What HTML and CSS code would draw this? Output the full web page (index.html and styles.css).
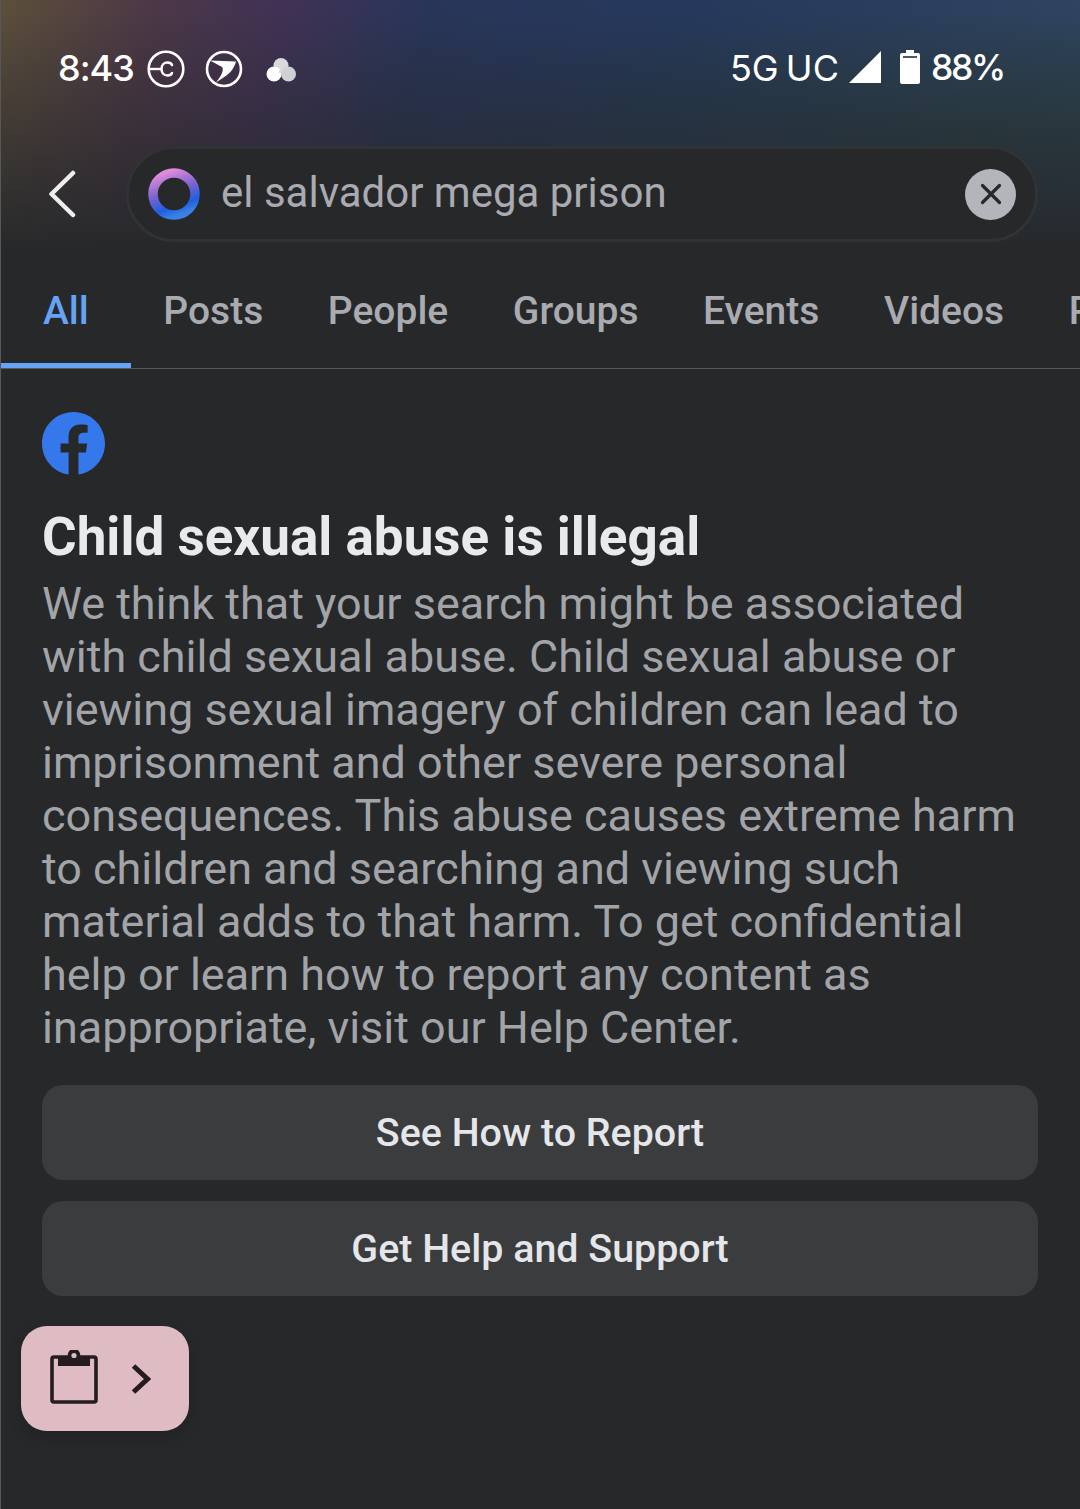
FILE: index.html
```html
<!DOCTYPE html>
<html lang="en">
<head>
<meta charset="utf-8">
<title>Search</title>
<link rel="stylesheet" href="styles.css">
</head>
<body>
<div class="screen">
  <header class="top">
    <div class="status">
      <div class="status-left">
        <span class="time">8:43</span>
        <svg class="ic-c" viewBox="0 0 38 38"><circle cx="19" cy="19" r="17.300" fill="none" stroke="#fff" stroke-width="2.600"/><path d="M2 19h12" stroke="#fff" stroke-width="2.400" fill="none"/><path d="M25 15c-.7-1.800-2.300-2.500-4.500-2.500-3.600 0-6 2.500-6 6.500s2.400 6.500 6 6.500c2.200 0 3.800-.7 4.500-2.500" stroke="#fff" stroke-width="2.500" fill="none" stroke-linecap="round"/></svg>
        <svg class="ic-p" viewBox="0 0 38 38"><circle cx="19" cy="19" r="17" fill="none" stroke="#fff" stroke-width="2.600"/><path d="M5 10.500 31 11.500C30 16 26 23 20 26.500L11 32.500C17 25 19 20 17 17Z" fill="#fff"/></svg>
        <svg class="ic-cloud" viewBox="0 0 32 26"><circle cx="9" cy="17" r="7.500" fill="#fff"/><circle cx="16" cy="8.500" r="7.500" fill="#d9dadd"/><circle cx="23.500" cy="17" r="7.500" fill="#cfd1d4"/><path d="M9 9.500a7.500 7.500 0 0 1 6 3l-3 5a7.500 7.500 0 0 1-3-8z" fill="#fff"/></svg>
      </div>
      <div class="status-right">
        <span class="net">5G UC</span>
        <svg class="ic-signal" viewBox="0 0 32 32"><path d="M32 0V32H0Z" fill="#fff"/></svg>
        <svg class="ic-batt" viewBox="0 0 20 34"><path d="M6 0h8v3h4a2 2 0 0 1 2 2v27a2 2 0 0 1-2 2H2a2 2 0 0 1-2-2V5a2 2 0 0 1 2-2h4z" fill="#fff"/><rect x="3" y="6" width="14" height="2" fill="#4b5a68"/></svg>
        <span class="pct">88%</span>
      </div>
    </div>
    <div class="searchrow">
      <svg class="ic-back" viewBox="0 0 28 48"><path d="M25 3 3.500 24 25 45" fill="none" stroke="#eceef0" stroke-width="4.500" stroke-linecap="round" stroke-linejoin="round"/></svg>
      <div class="searchbox">
        <svg class="ic-ring" viewBox="0 0 52 52">
          <defs><linearGradient id="rg" x1="0.25" y1="0" x2="0.6" y2="1"><stop offset="0" stop-color="#e08bd8"/><stop offset="0.45" stop-color="#7a62d0"/><stop offset="0.8" stop-color="#1f5fe0"/><stop offset="1" stop-color="#3a80e6"/></linearGradient></defs>
          <circle cx="26" cy="26" r="21" fill="none" stroke="url(#rg)" stroke-width="9.500"/>
        </svg>
        <span class="query">el salvador mega prison</span>
        <span class="clear"><svg viewBox="0 0 24 24"><path d="M3.500 3.500 20.500 20.500M20.500 3.500 3.500 20.500" stroke="#27282b" stroke-width="3.200" stroke-linecap="round" fill="none"/></svg></span>
      </div>
    </div>
  </header>
  <nav class="tabs">
    <span class="tab active">All</span>
    <span class="tab">Posts</span>
    <span class="tab">People</span>
    <span class="tab">Groups</span>
    <span class="tab">Events</span>
    <span class="tab">Videos</span>
    <span class="tab">Pages</span>
  </nav>
  <main class="content">
    <svg class="fb" viewBox="0 0 64 64"><path d="M64 32C64 14.300 49.700 0 32 0S0 14.300 0 32c0 16 11.700 29.200 27 31.600V41.200h-8.100V32H27v-7c0-8 4.800-12.400 12.100-12.400 3.500 0 7.200.6 7.200.6v7.900h-4c-4 0-5.300 2.500-5.300 5V32h8.900l-1.400 9.200H37v22.400C52.300 61.200 64 48 64 32z" fill="#3578ec"/></svg>
    <h1 class="title">Child sexual abuse is illegal</h1>
    <p class="body">We think that your search might be associated<br>with child sexual abuse. Child sexual abuse or<br>viewing sexual imagery of children can lead to<br>imprisonment and other severe personal<br>consequences. This abuse causes extreme harm<br>to children and searching and viewing such<br>material adds to that harm. To get confidential<br>help or learn how to report any content as<br>inappropriate, visit our Help Center.</p>
    <div class="actions">
      <button class="btn">See How to Report</button>
      <button class="btn">Get Help and Support</button>
    </div>
    <div class="float">
      <svg class="ic-clip" viewBox="0 0 48 54"><path d="M4 7h40a2 2 0 0 1 2 2v41a2 2 0 0 1-2 2H4a2 2 0 0 1-2-2V9a2 2 0 0 1 2-2z" fill="none" stroke="#241c1f" stroke-width="3.600"/><path d="M8 6.500h10a6.200 6.200 0 1 1 12 0h10V16H8z" fill="#241c1f"/><circle cx="24" cy="5.500" r="2.600" fill="#dfbcc3"/></svg>
      <svg class="ic-next" viewBox="0 0 20 32"><path d="M2.500 3 16.500 16 2.500 29" fill="none" stroke="#241c1f" stroke-width="5"/></svg>
    </div>
  </main>
</div>
</body>
</html>
```
FILE: styles.css
```css
* { box-sizing: border-box; }
html, body { margin: 0; padding: 0; }
body { width: 1080px; height: 1509px; overflow: hidden; background: #26282a; font-family: Roboto, "Liberation Sans", sans-serif; }
.screen { width: 1080px; height: 1509px; overflow: hidden; background: #26282a; border-left: 1px solid #55575a; display: flex; flex-direction: column; }
.top {
  height: 263px; margin-left: -1px;
  background:
    linear-gradient(to bottom, rgba(38,40,42,0) 0, rgba(38,40,42,0) 10px, #26282a 255px),
    radial-gradient(520px 130px at 90% 140px, rgba(38,66,52,.45), rgba(38,66,52,0)),
    linear-gradient(100deg, #5c4f3a 0, #4b3747 14%, #413255 25%, #283559 38%, #25395c 62%, #2f4560 100%);
  padding: 0 0 0 1px;
}
.status { height: 146px; display: flex; justify-content: space-between; padding: 47px 76px 0 57px; color: #fff; }
.status-left, .status-right { display: flex; align-items: flex-start; height: 42px; }
.time { font-family: Inter, Roboto, sans-serif; font-size: 36px; font-weight: 500; line-height: 42px; letter-spacing: -1px; }
.ic-c { width: 38px; height: 38px; margin: 3px 0 0 13px; }
.ic-p { width: 38px; height: 38px; margin: 3px 0 0 20px; }
.ic-cloud { width: 32px; height: 26px; margin: 10px 0 0 22px; }
.net { font-family: Inter, Roboto, sans-serif; font-size: 36px; line-height: 42px; word-spacing: -3px; }
.ic-signal { width: 32px; height: 32px; margin: 4px 0 0 10px; }
.ic-batt { width: 20px; height: 34px; margin: 3px 0 0 19px; }
.pct { font-family: Inter, Roboto, sans-serif; font-size: 35.500px; font-weight: 500; line-height: 42px; margin-left: 11px; letter-spacing: -2.300px; }
.searchrow { display: flex; align-items: center; padding: 0 42px 0 47px; }
.ic-back { width: 28px; height: 48px; flex: none; }
.searchbox { flex: 1; margin-left: 50px; height: 96px; border: 3px solid #303336; border-radius: 48px; background: #27282a; display: flex; align-items: center; padding: 0 19px 0 19px; }
.ic-ring { width: 52px; height: 52px; flex: none; }
.query { flex: 1; margin-left: 21px; margin-top: -2px; color: #a9abb0; font-size: 42px; line-height: 50px; }
.clear { width: 51px; height: 51px; border-radius: 50%; background: #b4b5ba; display: flex; align-items: center; justify-content: center; }
.clear svg { width: 24px; height: 24px; }
.tabs { height: 106px; margin-left: -1px; display: flex; border-bottom: 1px solid #55575a; overflow: hidden; flex: none; }
.tab { flex: none; padding: 0 32.300px; height: 105px; line-height: 96px; font-size: 39px; font-weight: 500; color: #a9abb0; }
.tab.active { color: #66a3f5; width: 131px; padding: 0 0 0 43px; border-bottom: 5px solid #66a3f5; margin-right: 0; }
.content { position: relative; flex: 1; padding: 43px 42px 0 41px; }
.fb { display: block; width: 63px; height: 63px; }
.title { margin: 32px 0 0; font-size: 53px; line-height: 60px; font-weight: 700; color: #e9eaec; }
.body { margin: 10px 0 0; font-size: 44.950px; line-height: 53px; color: #a2a4a8; white-space: nowrap; }
.actions { margin-top: 31px; display: flex; flex-direction: column; gap: 21px; }
.btn { display: block; width: 100%; height: 95px; border: 0; border-radius: 21px; background: #3a3c3e; color: #e4e6e9; font: 500 39.400px/44px Roboto, sans-serif; }
.float { position: absolute; left: 20px; top: 957px; width: 168px; height: 105px; border-radius: 26px; background: #dfbcc3; box-shadow: 0 6px 14px rgba(0,0,0,.18); display: flex; align-items: center; padding-left: 29px; }
.ic-clip { width: 48px; height: 54px; margin-top: -3px; }
.ic-next { width: 20px; height: 32px; margin-left: 33px; }
```
